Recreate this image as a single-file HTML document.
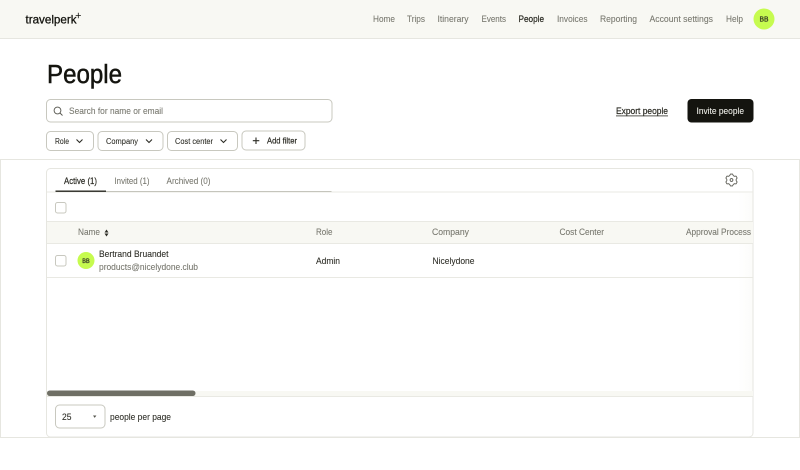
<!DOCTYPE html>
<html lang="en"><head><meta charset="utf-8"><title>People</title>
<style>
html,body{margin:0;padding:0;background:#fff;width:800px;height:470px;overflow:hidden}
svg{display:block;filter:blur(.35px)}
text{font-family:"Liberation Sans",sans-serif;font-size:9.3px;fill:#77776e;stroke:#77776e;stroke-width:.08px}
.d{fill:#2c2c25;stroke:#2c2c25}
.m{stroke:#2c2c25;stroke-width:.22px}
</style></head><body>
<svg width="800" height="470" viewBox="0 0 800 470" xmlns="http://www.w3.org/2000/svg">
<defs><linearGradient id="g" x1="0" x2="1" y1="0" y2="0"><stop offset="0" stop-color="#f4f4ee" stop-opacity="0"/><stop offset="1" stop-color="#f4f4ee" stop-opacity=".3"/></linearGradient></defs>
<rect width="800" height="470" fill="#fff"/>
<!-- header -->
<rect width="800" height="38" fill="#f8f8f3"/>
<rect y="38" width="800" height="1" fill="#e6e6e0"/>
<text x="25.5" y="23.5" textLength="51" lengthAdjust="spacingAndGlyphs" style="font-size:11.8px;fill:#14140f;stroke:#14140f;stroke-width:.3px">travelperk</text>
<path d="M78.3 12.8v5.4M75.7 15.5h5.2" stroke="#14140f" stroke-width=".8" fill="none"/>
<text x="373" y="22" textLength="22" lengthAdjust="spacingAndGlyphs">Home</text>
<text x="407" y="22" textLength="18" lengthAdjust="spacingAndGlyphs">Trips</text>
<text x="437.5" y="22" textLength="31" lengthAdjust="spacingAndGlyphs">Itinerary</text>
<text x="481.5" y="22" textLength="24.5" lengthAdjust="spacingAndGlyphs">Events</text>
<text x="518.5" y="22" textLength="25.5" lengthAdjust="spacingAndGlyphs" class="d m">People</text>
<text x="557" y="22" textLength="30.5" lengthAdjust="spacingAndGlyphs">Invoices</text>
<text x="600" y="22" textLength="37" lengthAdjust="spacingAndGlyphs">Reporting</text>
<text x="649.5" y="22" textLength="63.5" lengthAdjust="spacingAndGlyphs">Account settings</text>
<text x="726" y="22" textLength="17" lengthAdjust="spacingAndGlyphs">Help</text>
<circle cx="764" cy="19" r="10.5" fill="#c6fb4f"/>
<text x="759.5" y="21.7" textLength="9" lengthAdjust="spacingAndGlyphs" class="d m" style="font-size:7.5px">BB</text>
<!-- title -->
<text x="47" y="83" textLength="75" lengthAdjust="spacingAndGlyphs" style="font-size:25.5px;fill:#14140f;stroke:#14140f;stroke-width:.5px">People</text>
<!-- search -->
<rect x="46.5" y="99.5" width="285.5" height="22.5" rx="4" fill="#fff" stroke="#c8c8bf"/>
<circle cx="57.5" cy="110.5" r="3.4" fill="none" stroke="#55554d" stroke-width=".9"/>
<path d="M60 113l2.5 2.5" stroke="#55554d" stroke-width=".9" fill="none"/>
<text x="69" y="114" textLength="94" lengthAdjust="spacingAndGlyphs">Search for name or email</text>
<text x="616" y="114" textLength="52" lengthAdjust="spacingAndGlyphs" class="d m">Export people</text>
<rect x="616" y="115.5" width="52" height=".8" fill="#2c2c25"/>
<rect x="687.5" y="99" width="66" height="23.5" rx="4" fill="#14140f"/>
<text x="696.5" y="114" textLength="47.5" lengthAdjust="spacingAndGlyphs" style="fill:#f0f0ea;stroke:#f0f0ea">Invite people</text>
<!-- filters -->
<g fill="#fff" stroke="#c8c8bf">
<rect x="46.5" y="131.5" width="47" height="19" rx="4"/>
<rect x="98" y="131.5" width="65" height="19" rx="4"/>
<rect x="167.5" y="131.5" width="70" height="19" rx="4"/>
<rect x="242" y="131" width="63" height="19" rx="4"/>
</g>
<text x="55" y="144" textLength="14" lengthAdjust="spacingAndGlyphs" class="d" style="font-size:8.6px">Role</text>
<text x="106" y="144" textLength="32" lengthAdjust="spacingAndGlyphs" class="d" style="font-size:8.6px">Company</text>
<text x="175" y="144" textLength="38" lengthAdjust="spacingAndGlyphs" class="d" style="font-size:8.6px">Cost center</text>
<text x="267" y="143.5" textLength="30" lengthAdjust="spacingAndGlyphs" class="d m" style="font-size:8.6px">Add filter</text>
<g fill="none" stroke="#2c2c25" stroke-width="1.1">
<path d="M76.5 139.5l3 3 3-3"/>
<path d="M146 139.5l3 3 3-3"/>
<path d="M220.5 139.5l3 3 3-3"/>
<path d="M256 137.5v6.5M252.8 140.7h6.5"/>
</g>
<!-- outer box -->
<rect x=".5" y="159.5" width="799" height="278" fill="#fff" stroke="#e6e6e0"/>
<!-- card -->
<rect x="46.5" y="168.5" width="706.5" height="268.5" rx="4" fill="#fff" stroke="#e6e6e0"/>
<rect x="738" y="193" width="14.5" height="198" fill="url(#g)"/>
<!-- tabs -->
<rect x="47" y="191.5" width="706" height="1" fill="#e9e9e3"/>
<rect x="55.5" y="191" width="276" height="1" fill="#c5c5bc"/>
<rect x="55.5" y="190.5" width="50.5" height="1.4" fill="#2c2c25"/>
<text x="64" y="184" textLength="33" lengthAdjust="spacingAndGlyphs" class="d m">Active (1)</text>
<text x="114.5" y="184" textLength="35" lengthAdjust="spacingAndGlyphs">Invited (1)</text>
<text x="166.5" y="184" textLength="44" lengthAdjust="spacingAndGlyphs">Archived (0)</text>
<path d="M730.36 174.11L732.64 174.11 733.26 175.64 734.39 176.3 736.03 176.06 737.17 178.05 736.15 179.35 736.15 180.65 737.17 181.95 736.03 183.94 734.39 183.7 733.26 184.36 732.64 185.89 730.36 185.89 729.74 184.36 728.61 183.7 726.97 183.94 725.83 181.95 726.85 180.65 726.85 179.35 725.83 178.05 726.97 176.06 728.61 176.3 729.74 175.64Z" fill="none" stroke="#55554d" stroke-width=".85" stroke-linejoin="round"/>
<circle cx="731.5" cy="180" r="1.4" fill="none" stroke="#55554d" stroke-width=".85"/>
<!-- check all -->
<rect x="55.5" y="202.5" width="10.5" height="10.5" rx="2" fill="#fff" stroke="#c8c8bf"/>
<!-- table head -->
<rect x="47" y="221" width="706" height="22.5" fill="#f8f8f3"/>
<rect x="47" y="221" width="706" height="1" fill="#e9e9e3"/>
<rect x="47" y="243" width="706" height="1" fill="#e9e9e3"/>
<text x="78" y="235" textLength="22" lengthAdjust="spacingAndGlyphs">Name</text>
<path d="M104.5 232.5l2-3 2 3zM104.5 233.5l2 3 2-3z" fill="#2c2c25"/>
<text x="316" y="235" textLength="16.5" lengthAdjust="spacingAndGlyphs">Role</text>
<text x="432" y="235" textLength="37" lengthAdjust="spacingAndGlyphs">Company</text>
<text x="559.5" y="235" textLength="44.5" lengthAdjust="spacingAndGlyphs">Cost Center</text>
<text x="686" y="235" textLength="65" lengthAdjust="spacingAndGlyphs">Approval Process</text>
<!-- row -->
<rect x="47" y="277" width="706" height="1" fill="#e9e9e3"/>
<rect x="55.5" y="255.5" width="10.5" height="10.5" rx="2" fill="#fff" stroke="#c8c8bf"/>
<circle cx="86" cy="260.5" r="8.5" fill="#c6fb4f"/>
<text x="82.3" y="262.8" textLength="7.4" lengthAdjust="spacingAndGlyphs" class="d m" style="font-size:6px">BB</text>
<text x="99" y="257" textLength="69.5" lengthAdjust="spacingAndGlyphs" class="d">Bertrand Bruandet</text>
<text x="99" y="270" textLength="99" lengthAdjust="spacingAndGlyphs">products@nicelydone.club</text>
<text x="316" y="264" textLength="24" lengthAdjust="spacingAndGlyphs" class="d">Admin</text>
<text x="432.5" y="264" textLength="42" lengthAdjust="spacingAndGlyphs" class="d">Nicelydone</text>
<!-- scrollbar -->
<rect x="47" y="391" width="706" height="5" fill="#f8f8f3"/>
<rect x="47" y="396" width="706" height="1" fill="#e9e9e3"/>
<rect x="47" y="390.5" width="148.5" height="5.5" rx="2.7" fill="#6f6f65"/>
<!-- pager -->
<rect x="55.5" y="405" width="49.5" height="23" rx="4" fill="#fff" stroke="#c8c8bf"/>
<text x="62" y="420" textLength="9.5" lengthAdjust="spacingAndGlyphs" class="d">25</text>
<path d="M93 415.5h3.4l-1.7 2.4z" fill="#55554d"/>
<text x="110" y="420" textLength="61" lengthAdjust="spacingAndGlyphs" class="d">people per page</text>
</svg>
</body></html>
